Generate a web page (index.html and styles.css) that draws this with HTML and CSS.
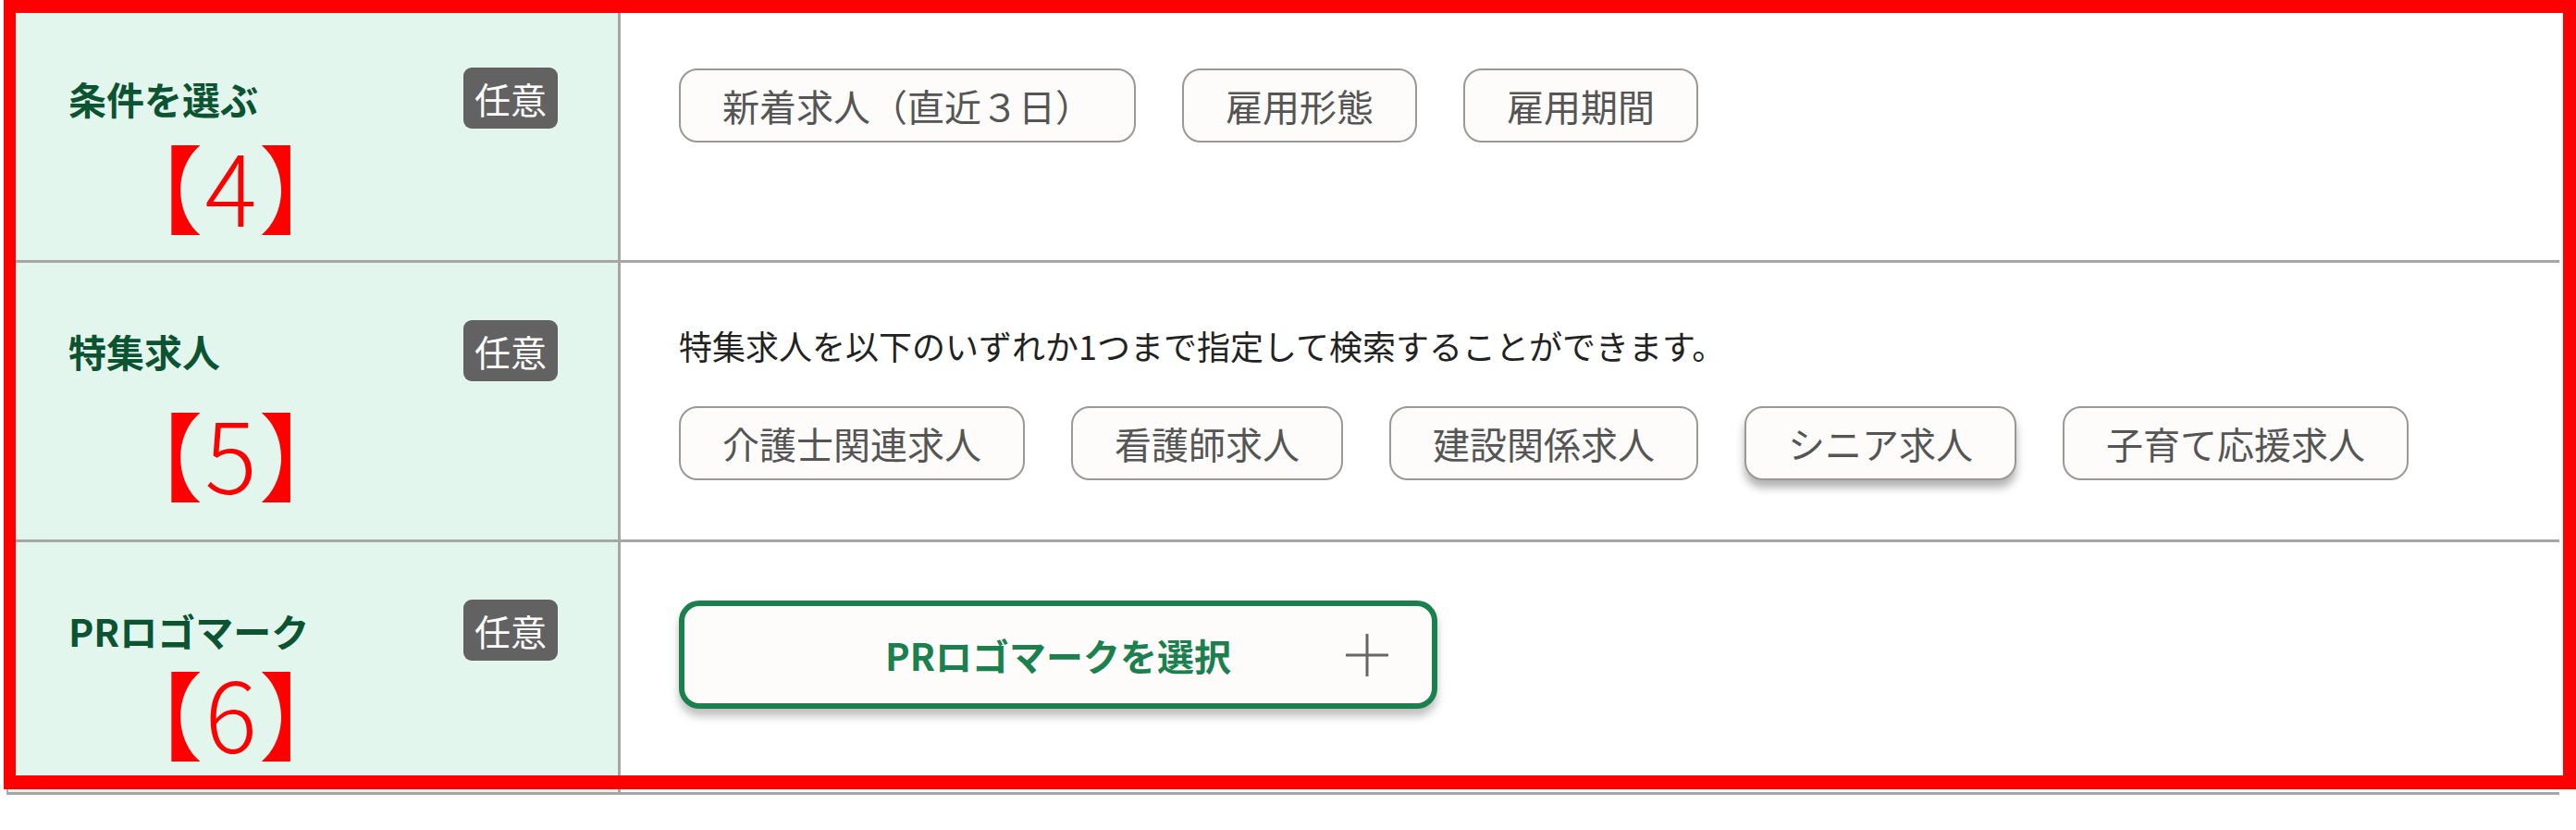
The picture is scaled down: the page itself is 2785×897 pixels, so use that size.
FILE: index.html
```html
<!DOCTYPE html>
<html lang="ja">
<head>
    <meta charset="UTF-8">
    <meta name="viewport" content="width=device-width, initial-scale=1.0">
    <title>求人検索 条件</title>
    <link rel="stylesheet" href="styles.css">
</head>
<body>
    <div class="page">
        <div class="search-table">
            <!-- 条件を選ぶ -->
            <div class="search-row">
                <div class="label-cell">
                    <div class="label-head">
                        <span class="label-text">条件を選ぶ</span>
                        <span class="badge">任意</span>
                    </div>
                    <span class="note note-4">【4】</span>
                </div>
                <div class="value-cell">
                    <div class="chip-list">
                        <button class="chip">新着求人（直近３日）</button>
                        <button class="chip">雇用形態</button>
                        <button class="chip">雇用期間</button>
                    </div>
                </div>
            </div>

            <!-- 特集求人 -->
            <div class="search-row">
                <div class="label-cell">
                    <div class="label-head">
                        <span class="label-text">特集求人</span>
                        <span class="badge">任意</span>
                    </div>
                    <span class="note note-5">【5】</span>
                </div>
                <div class="value-cell">
                    <p class="description">特集求人を以下のいずれか1つまで指定して検索することができます。</p>
                    <div class="chip-list">
                        <button class="chip">介護士関連求人</button>
                        <button class="chip">看護師求人</button>
                        <button class="chip">建設関係求人</button>
                        <button class="chip chip-hover">シニア求人</button>
                        <button class="chip">子育て応援求人</button>
                    </div>
                </div>
            </div>

            <!-- PRロゴマーク -->
            <div class="search-row">
                <div class="label-cell">
                    <div class="label-head">
                        <span class="label-text">PRロゴマーク</span>
                        <span class="badge">任意</span>
                    </div>
                    <span class="note note-6">【6】</span>
                </div>
                <div class="value-cell">
                    <button class="select-button">
                        <span class="select-text">PRロゴマークを選択</span>
                        <svg class="plus-icon" width="46" height="46" viewBox="0 0 46 46">
                            <path d="M23 0V46M0 23H46" stroke="#666" stroke-width="3" fill="none"/>
                        </svg>
                    </button>
                </div>
            </div>
        </div>

        <!-- 赤枠 -->
        <div class="red-frame"></div>
    </div>
</body>
</html>
```

FILE: styles.css
```css
body {
    margin: 0;
    background-color: white;
    font-family: "Noto Sans CJK JP", "Noto Sans", sans-serif;
    color: #222;
}

.page {
    position: relative;
    width: 2785px;
    height: 897px;
    padding: 11px 0 0 7px;
    box-sizing: border-box;
}

/* テーブル */
.search-table {
    width: 2758px;
    border-left: 2px solid #a8a8a8;
    border-bottom: 3px solid #a6a6a6;
}

.search-row {
    display: grid;
    grid-template-columns: 662px 1fr;
    min-height: 270px;
    border-bottom: 3px solid #a6a6a6;
}

.search-row:last-child {
    border-bottom: none;
}

.label-cell {
    position: relative;
    background-color: #e2f6ee;
    border-right: 3px solid #a6a6a6;
    padding: 62px 65px 0 65px;
}

.label-head {
    display: flex;
    justify-content: space-between;
    align-items: center;
}

.label-text {
    font-size: 41px;
    font-weight: bold;
    color: #0b5331;
}

.badge {
    background-color: #626262;
    color: white;
    font-size: 39px;
    line-height: 52px;
    padding: 7px 12px;
    border-radius: 9px;
}

/* 注記 */
.note {
    position: absolute;
    left: 156px;
    color: #ff0000;
    font-size: 105px;
    font-weight: 300;
    line-height: 1;
    letter-spacing: 4px;
    font-feature-settings: "palt";
    white-space: nowrap;
}

.note-4 {
    top: 136px;
}

.note-5 {
    top: 152px;
}

.note-6 {
    top: 130px;
}

.value-cell {
    padding: 63px 0 64px 63px;
}

.description {
    margin: 0 0 40px 0;
    font-size: 36px;
    line-height: 52px;
    color: #222;
}

.chip-list {
    display: flex;
    gap: 50px;
}

.chip {
    font-family: inherit;
    font-size: 40px;
    line-height: 60px;
    padding: 8px 45px;
    color: #555;
    background-color: #fdfcfb;
    border: 2px solid #999;
    border-radius: 20px;
}

.chip-hover {
    box-shadow: 0 8px 10px rgba(0, 0, 0, 0.3);
}

/* PRロゴマーク選択ボタン */
.select-button {
    display: grid;
    grid-template-columns: 1fr auto 1fr;
    align-items: center;
    width: 820px;
    height: 117px;
    padding: 0 47px;
    font-family: inherit;
    background-color: #fdfcfb;
    border: 6px solid #1b7f4e;
    border-radius: 22px;
    box-shadow: 0 8px 10px rgba(0, 0, 0, 0.25);
}

.select-text {
    grid-column: 2;
    font-size: 40px;
    font-weight: bold;
    color: #1b7f4e;
}

.plus-icon {
    grid-column: 3;
    justify-self: end;
}

.red-frame {
    position: absolute;
    top: 0;
    left: 4px;
    width: 2781px;
    height: 853px;
    box-sizing: border-box;
    border-style: solid;
    border-color: #ff0000;
    border-width: 14px 14px 15px 13px;
    pointer-events: none;
}
```
